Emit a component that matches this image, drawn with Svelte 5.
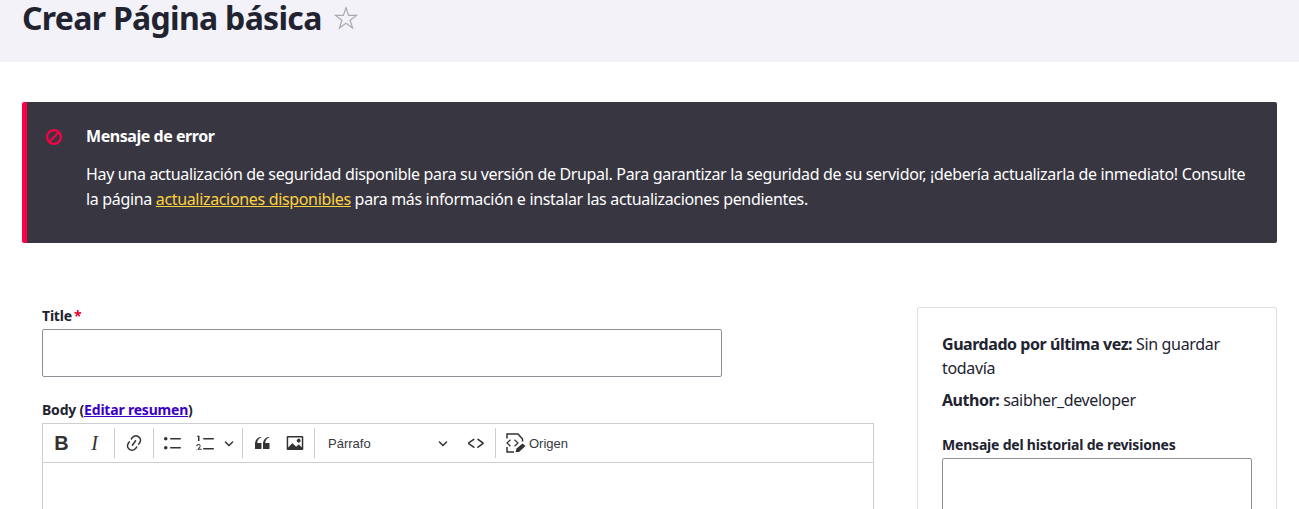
<script>
    const toolbarIcons = {
        link: "m11.077 15 .991-1.416a.75.75 0 1 1 1.229.86l-1.148 1.64a.748.748 0 0 1-.217.206 5.251 5.251 0 0 1-8.503-5.955.741.741 0 0 1 .12-.274l1.147-1.639a.75.75 0 1 1 1.228.86L4.933 10.7l.006.003a3.75 3.75 0 0 0 6.132 4.294l.006.004zm5.494-5.335a.748.748 0 0 1-.12.274l-1.147 1.639a.75.75 0 1 1-1.228-.86l.86-1.23a3.75 3.75 0 0 0-6.144-4.301l-.86 1.229a.75.75 0 0 1-1.229-.86l1.148-1.64a.748.748 0 0 1 .217-.206 5.251 5.251 0 0 1 8.503 5.955zm-4.563-2.532a.75.75 0 0 1 .184 1.045l-3.155 4.505a.75.75 0 1 1-1.229-.86l3.155-4.506a.75.75 0 0 1 1.045-.184z",
        bullets: "M7 5.750c0 .414.336.75.75.75h9.5a.75.75 0 1 0 0-1.5h-9.5a.75.75 0 0 0-.75.75zm-6 0C1 4.784 1.777 4 2.750 4c.966 0 1.750.777 1.750 1.750 0 .966-.777 1.750-1.750 1.750C1.784 7.500 1 6.723 1 5.750zm6 9c0 .414.336.75.75.75h9.500a.75.75 0 1 0 0-1.500h-9.500a.75.75 0 0 0-.75.75zm-6 0c0-.966.777-1.750 1.750-1.750.966 0 1.750.777 1.750 1.750 0 .966-.777 1.750-1.750 1.750-.966 0-1.750-.777-1.750-1.750z",
        numbers: "M7 5.750c0 .414.336.75.75.75h9.500a.75.75 0 1 0 0-1.500h-9.500a.75.75 0 0 0-.75.75zM3.500 3v5H2V3.700H1v-1h2.500V3zM.343 17.857l2.590-3.257c2.160-2.430-.06-3.120-.95-2.380-.89.74-1.180.93-1.180.93l-.7-.79s1.100-1.300 2.600-1.300c1.300 0 3.100 1.800.9 4.200l-.4.5h2.400v1.100H.343zm6.657-2.107c0 .414.336.75.75.75h9.500a.75.75 0 1 0 0-1.500h-9.500a.75.75 0 0 0-.75.75z",
        quote: "M3 10.423a6.500 6.500 0 0 1 6.056-6.408l.038.67C6.448 5.423 5.354 7.663 5.220 10H9c.552 0 .5.432.5.986v4.511c0 .554-.448.503-1 .503h-5c-.552 0-.5-.449-.5-1.003v-4.574zm8 0a6.500 6.500 0 0 1 6.056-6.408l.038.67c-2.646.739-3.740 2.979-3.873 5.315H17c.552 0 .5.432.5.986v4.511c0 .554-.448.503-1 .503h-5c-.552 0-.5-.449-.5-1.003v-4.574z",
        image: "M6.910 10.540c.26-.23.64-.21.88.03l3.360 3.140 2.230-2.060a.64.64 0 0 1 .87 0l2.520 2.970V4.500H3.200v10.120l3.710-4.080zm10.270-7.510c.6 0 1.090.47 1.090 1.050v11.840c0 .59-.49 1.060-1.090 1.060H2.790c-.6 0-1.090-.47-1.090-1.060V4.080c0-.58.49-1.050 1.100-1.050h14.380zm-5.220 5.560a1.960 1.960 0 1 1 3.400-1.960 1.960 1.960 0 0 1-3.400 1.960z",
        code: "m12.500 5.700 5.200 3.900v1.300l-5.600 4c-.1.2-.3.2-.5.2-.3-.1-.6-.7-.6-1l.3-.4 4.700-3.500L11.500 7l-.2-.2c-.1-.3-.1-.6 0-.8.2-.2.5-.4.8-.4a.8.8 0 0 1 .4.1zm-5.200 0L2 9.600v1.300l5.600 4c.1.2.3.2.5.2.3-.1.7-.7.6-1 0-.1 0-.3-.2-.4l-5-3.500L8.200 7l.2-.2c.1-.3.1-.6 0-.8-.2-.2-.5-.4-.8-.4a.8.8 0 0 0-.3.1z",
    };
    const arrow = "M.941 4.523a.75.75 0 1 1 1.06-1.06l3.006 3.005 3.005-3.005a.75.75 0 1 1 1.06 1.06l-3.549 3.55a.75.75 0 0 1-1.168-.136L.941 4.523z";
</script>

<header class="page-header">
    <h1>Crear Página básica</h1>
    <svg class="star" viewBox="0 0 24 24" width="24" height="24" aria-hidden="true">
        <path d="M12 1.800l2.600 7.600h8l-6.500 4.800 2.400 7.700L12 17.200l-6.500 4.700 2.400-7.700L1.400 9.400h8z" fill="none" stroke="#a9a9ae" stroke-width="1.200" stroke-linejoin="miter" />
    </svg>
</header>

<main class="content">
    <div class="message" role="alert">
        <svg class="message-icon" viewBox="0 0 16 16" width="16" height="16" aria-hidden="true">
            <circle cx="8" cy="8" r="6.900" fill="none" stroke="#fb0046" stroke-width="2.200" />
            <path d="M3.500 12.500L12.500 3.500" stroke="#fb0046" stroke-width="2.200" />
        </svg>
        <div class="message-body">
            <h2>Mensaje de error</h2>
            <p>
                Hay una actualización de seguridad disponible para su versión de Drupal. Para garantizar la seguridad de su servidor, ¡debería actualizarla de inmediato! Consulte la página <a href="#updates">actualizaciones disponibles</a> para más información e instalar las actualizaciones pendientes.
            </p>
        </div>
    </div>

    <form class="layout">
        <div class="form-main">
            <div class="field">
                <label for="title">Title<span class="required">*</span></label>
                <input id="title" type="text" />
            </div>
            <div class="field body-field">
                <div class="label">Body (<a href="#summary">Editar resumen</a>)</div>
                <div class="editor">
                    <div class="toolbar">
                        <button type="button" class="tool letter bold">B</button>
                        <button type="button" class="tool letter italic">I</button>
                        <span class="sep"></span>
                        <button type="button" class="tool" aria-label="Enlace">
                            <svg viewBox="0 0 20 20"><path d={toolbarIcons.link} /></svg>
                        </button>
                        <span class="sep"></span>
                        <button type="button" class="tool" aria-label="Lista">
                            <svg viewBox="0 0 20 20"><path d={toolbarIcons.bullets} /></svg>
                        </button>
                        <button type="button" class="tool numbered" aria-label="Lista numerada">
                            <svg viewBox="0 0 20 20"><path d={toolbarIcons.numbers} /></svg>
                            <svg class="arrow" viewBox="0 0 10 10"><path d={arrow} /></svg>
                        </button>
                        <span class="sep"></span>
                        <button type="button" class="tool" aria-label="Cita">
                            <svg viewBox="0 0 20 20"><path d={toolbarIcons.quote} /></svg>
                        </button>
                        <button type="button" class="tool" aria-label="Imagen">
                            <svg viewBox="0 0 20 20"><path d={toolbarIcons.image} /></svg>
                        </button>
                        <span class="sep"></span>
                        <button type="button" class="heading">
                            <span>Párrafo</span>
                            <svg class="arrow" viewBox="0 0 10 10"><path d={arrow} /></svg>
                        </button>
                        <button type="button" class="tool" aria-label="Código">
                            <svg viewBox="0 0 20 20"><path d={toolbarIcons.code} /></svg>
                        </button>
                        <span class="sep"></span>
                        <button type="button" class="source">
                            <svg viewBox="0 0 20 20">
                                <path class="outline" d="M1 5.500V1H12L16.500 6V8.500M1 14V19H8" />
                                <path class="outline thin" d="M4.500 6.700L1 10L4.500 13.300M8.500 6.700L12 10L8.500 13.300" />
                                <path d="M9.500 19L10.500 15.500L16.500 10.500L19.500 13L13 19Z" />
                            </svg>
                            <span>Origen</span>
                        </button>
                    </div>
                    <div class="editable"></div>
                </div>
            </div>
        </div>

        <aside class="sidebar">
            <p class="meta"><strong>Guardado por última vez:</strong> Sin guardar todavía</p>
            <p class="meta"><strong>Author:</strong> saibher_developer</p>
            <label for="log">Mensaje del historial de revisiones</label>
            <textarea id="log"></textarea>
        </aside>
    </form>
</main>

<style>
    :global(body) {
        overflow: hidden;
        background: #fff;
        color: #222330;
        font-family: "Noto Sans", sans-serif;
        font-size: 16px;
        letter-spacing: -0.335px;
    }

    .page-header {
        display: flex;
        align-items: center;
        gap: 12px;
        height: 62px;
        padding: 0 22px 26px;
        box-sizing: border-box;
        background: #f3f2f9;
    }

    h1 {
        margin: 0;
        font-size: 32px;
        font-weight: 700;
        line-height: 36px;
        letter-spacing: -0.7px;
    }

    .star {
        flex: none;
    }

    .content {
        padding: 40px 22px 0;
    }

    .message {
        display: flex;
        gap: 24px;
        height: 141px;
        box-sizing: border-box;
        padding: 22px 24px 0 19px;
        background: #383641;
        border-left: 5px solid #fb0046;
        border-radius: 2px;
        color: #fff;
    }

    .message-icon {
        flex: none;
        margin-top: 5px;
    }

    h2 {
        margin: 0 0 14px;
        font-size: 16px;
        font-weight: 700;
        line-height: 24px;
        letter-spacing: -0.45px;
    }

    strong {
        letter-spacing: -0.45px;
    }

    .message p {
        margin: 0;
        line-height: 25px;
    }

    .message a {
        color: #ffd23f;
    }

    .layout {
        display: grid;
        grid-template-columns: 1fr 360px;
        gap: 23px;
        margin-top: 64px;
    }

    .form-main {
        padding: 0 20px;
    }

    .field label,
    .label,
    .sidebar label {
        display: block;
        font-size: 14px;
        font-weight: 700;
        line-height: 18px;
        letter-spacing: -0.2px;
    }

    .field label,
    .label {
        margin-bottom: 4px;
    }

    .required {
        margin-left: 2px;
        color: #e6002e;
    }

    #title {
        display: block;
        width: 680px;
        height: 48px;
        box-sizing: border-box;
        border: 1px solid #8e8e96;
        border-radius: 2px;
        background: #fff;
    }

    .body-field {
        margin-top: 24px;
    }

    .label a {
        color: #3b00c7;
    }

    .editor {
        border: 1px solid #ccced1;
        border-bottom: 0;
    }

    .toolbar {
        display: flex;
        align-items: center;
        height: 38px;
        padding-left: 2px;
        border-bottom: 1px solid #ccced1;
        font-family: "Liberation Sans", sans-serif;
        letter-spacing: 0;
        color: #333;
    }

    .toolbar button {
        display: flex;
        flex: none;
        align-items: center;
        border: 0;
        padding: 0;
        background: none;
        font: inherit;
        color: inherit;
    }

    .tool {
        justify-content: center;
        width: 33px;
        height: 30px;
    }

    .tool svg,
    .source svg {
        width: 20px;
        height: 20px;
        fill: #333;
    }

    .toolbar .tool.letter {
        font-size: 20px;
        line-height: 1;
    }

    .toolbar .bold {
        font-weight: 700;
    }

    .toolbar .italic {
        font-family: "Liberation Serif", serif;
        font-style: italic;
    }

    .toolbar .numbered {
        justify-content: flex-start;
        width: 50px;
        padding-left: 7px;
        box-sizing: border-box;
    }

    .toolbar svg.arrow {
        width: 10px;
        height: 10px;
        fill: #333;
    }

    .numbered .arrow {
        margin-left: 8px;
    }

    .sep {
        flex: none;
        width: 1px;
        height: 30px;
        margin: 0 2px 0 3px;
        background: #ccced1;
    }

    .toolbar .heading {
        justify-content: space-between;
        width: 142px;
        padding: 0 11px;
        font-size: 13px;
        box-sizing: border-box;
        color: #36393f;
    }

    .toolbar .source {
        gap: 3px;
        padding-left: 8px;
        font-size: 13px;
        color: #36393f;
    }

    .source .outline {
        fill: none;
        stroke: #333;
        stroke-width: 1.500;
    }

    .source .thin {
        stroke-width: 1.200;
    }

    .editable {
        height: 200px;
    }

    .sidebar {
        height: 400px;
        box-sizing: border-box;
        padding: 24px;
        border: 1px solid #dedfe4;
        border-radius: 2px;
    }

    .meta {
        margin: 0 0 8px;
        line-height: 24px;
    }

    .sidebar label {
        margin-top: 24px;
    }

    #log {
        display: block;
        width: 310px;
        height: 120px;
        box-sizing: border-box;
        margin-top: 4px;
        border: 1px solid #8e8e96;
        border-radius: 2px;
    }
</style>
